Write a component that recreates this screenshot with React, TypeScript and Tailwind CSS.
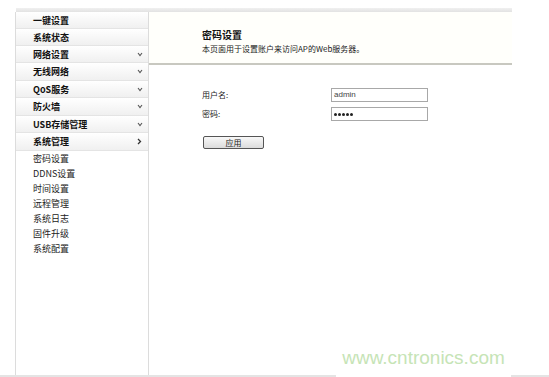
import React from "react";

const font = { fontFamily: '"SimSun","Noto Sans CJK SC","Liberation Sans",sans-serif' };

const menu: { label: string; h: string; chevron?: string }[] = [
  { label: "一键设置", h: "h-[17px]" },
  { label: "系统状态", h: "h-[17px]" },
  { label: "网络设置", h: "h-[17px]", chevron: "v" },
  { label: "无线网络", h: "h-[18px]", chevron: "v" },
  { label: "QoS服务", h: "h-[17px]", chevron: "v" },
  { label: "防火墙", h: "h-[18px]", chevron: "v" },
  { label: "USB存储管理", h: "h-[17px]", chevron: "v" },
  { label: "系统管理", h: "h-[18px]", chevron: ">" },
];

const sub = ["密码设置", "DDNS设置", "时间设置", "远程管理", "系统日志", "固件升级", "系统配置"];

function Chevron({ kind }: { kind: string }) {
  if (kind === ">") {
    return (
      <svg width="5" height="7" viewBox="0 0 5 7" className="mr-[4px]">
        <path d="M1 1 L3.5 3.5 L1 6" stroke="#333" strokeWidth="1.3" fill="none" />
      </svg>
    );
  }
  return (
    <svg width="6" height="5" viewBox="0 0 6 5" className="mr-[3px]">
      <path d="M1 1 L3 3.5 L5 1" stroke="#555" strokeWidth="1.1" fill="none" />
    </svg>
  );
}

export default function App() {
  return (
    <div className="relative w-[549px] h-[377px] bg-white overflow-hidden text-[#222]" style={font}>
      <div className="flex flex-col h-full">
        <div className="mt-[8px] ml-[16px] w-[496px] h-[4px] bg-gradient-to-b from-[#f0f0f0] to-[#e2e2e2]" />
        <div className="flex flex-1">
          <div className="ml-[15px] w-[134px] border-l border-r border-[#dcdcdc] flex flex-col">
            {menu.map((m) => (
              <div
                key={m.label}
                className={`${m.h} flex items-center justify-between pl-[17px] pr-[2px] border-b border-[#e4e4e4] bg-gradient-to-b from-[#ffffff] to-[#f0f0f0] text-[9px] font-bold text-[#111]`}
              >
                <span className="leading-none">{m.label}</span>
                {m.chevron && <Chevron kind={m.chevron} />}
              </div>
            ))}
            <div className="flex flex-col">
              {sub.map((s) => (
                <div key={s} className="h-[15px] flex items-center pl-[17px] text-[9px] text-[#222] leading-none">
                  {s}
                </div>
              ))}
            </div>
          </div>
          <div className="flex-1 flex flex-col">
            <div className="w-[363px] h-[53px] bg-[#fffffb] border-b-2 border-[#c8c8c0] pl-[53px] pt-[18px]">
              <div className="text-[10px] font-bold leading-none text-[#111]">密码设置</div>
              <div className="mt-[5px] text-[8px] leading-none text-[#222]">本页面用于设置账户来访问AP的Web服务器。</div>
            </div>
            <div className="pl-[53px] pt-[23px] flex flex-col">
              <div className="flex items-center h-[14px]">
                <span className="w-[129px] text-[8px] leading-none">用户名:</span>
                <div className="w-[97px] h-[14px] border border-[#a8a8a8] flex items-center pl-[2px] text-[8px] text-[#444]" style={{ fontFamily: '"Liberation Sans",sans-serif' }}>
                  admin
                </div>
              </div>
              <div className="flex items-center h-[14px] mt-[5px]">
                <span className="w-[129px] text-[8px] leading-none">密码:</span>
                <div className="w-[97px] h-[14px] border border-[#a8a8a8] flex items-center pl-[2px] gap-[1px]">
                  {[0, 1, 2, 3, 4].map((i) => (
                    <span key={i} className="w-[3px] h-[3px] rounded-full bg-[#222]" />
                  ))}
                </div>
              </div>
              <div className="mt-[15px] ml-[1px] w-[61px] h-[13px] border border-[#555] rounded-[2px] bg-gradient-to-b from-[#f8f8f8] to-[#dcdcdc] flex items-center justify-center text-[8px] leading-none">
                应用
              </div>
            </div>
          </div>
        </div>
        <div className="h-[2px] bg-[#e4e4e4]" />
      </div>
      <div
        className="absolute left-[336px] top-[339px] w-[175px] h-[38px] bg-white flex items-center justify-center text-[19px] text-[#c6e4b6]"
        style={{ fontFamily: '"Liberation Sans",Arial,sans-serif' }}
      >
        www.cntronics.com
      </div>
    </div>
  );
}
